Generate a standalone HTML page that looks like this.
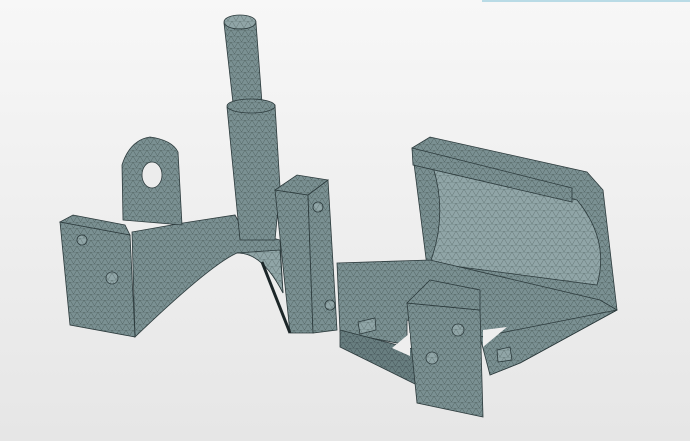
<!DOCTYPE html>
<html><head><meta charset="utf-8"><style>
html,body{margin:0;padding:0;}
body{width:690px;height:441px;overflow:hidden;background:linear-gradient(#f7f7f7,#e6e6e6);position:relative;}
.bar{position:absolute;left:482px;top:0;width:208px;height:2px;background:#b9dbe6;}
</style></head><body>
<div class="bar"></div>
<svg width="690" height="441" style="position:absolute;left:0;top:0">
<defs>
<pattern id="m" width="7" height="6" patternUnits="userSpaceOnUse">
<rect width="7" height="6" fill="#7a9092"/>
<path d="M0 0L7 0M0 0L3.5 6L7 0" stroke="#33423f" stroke-width="0.5" fill="none" opacity="0.6"/>
</pattern>
<pattern id="l" width="8" height="7" patternUnits="userSpaceOnUse">
<rect width="8" height="7" fill="#90a5a7"/>
<path d="M0 0L8 0M0 0L4 7L8 0" stroke="#33423f" stroke-width="0.5" fill="none" opacity="0.5"/>
</pattern>
<pattern id="d" width="7" height="6" patternUnits="userSpaceOnUse">
<rect width="7" height="6" fill="#687e80"/>
<path d="M0 0L7 0M0 0L3.5 6L7 0" stroke="#2a3638" stroke-width="0.5" fill="none" opacity="0.6"/>
</pattern>
</defs>
<g stroke="#2c3a3c" stroke-width="0.8">
<polygon points="412,148 430,137 587,172 603,190 617,310 520,363 430,290" fill="url(#m)"/>
<path d="M433,167 Q448,215 430,263 L597,285 Q610,240 577,200 Z" fill="url(#l)"/>
<polygon points="412,148 572,188 572,202 413,165" fill="url(#m)"/>
<polygon points="337,263 430,260 600,300 617,310 520,363 490,375 483,340 407,320 407,345 340,332" fill="url(#m)"/>
<polygon points="480,337 617,310 520,363 490,375" fill="url(#m)"/>
<polygon points="340,330 417,350 417,385 340,347" fill="url(#d)"/>
<path d="M132,232 L183,223 L235,215 L243,230 L280,240 L283,293 Q262,252 237,253 Q210,265 135,337 Z" fill="url(#m)"/>
<path d="M237,253 Q262,252 283,293 L280,250 Z" fill="url(#l)"/>
<path d="M123,220 L122,165 Q130,140 150,137 Q172,140 178,152 L182,225 Z" fill="url(#m)"/>
<ellipse cx="152" cy="175" rx="10" ry="13" fill="#ececec"/>
<polygon points="60,222 130,235 135,337 70,325" fill="url(#m)"/>
<polygon points="60,222 73,215 125,225 130,235" fill="url(#m)"/>
<circle cx="82" cy="240" r="5" fill="url(#l)"/><circle cx="112" cy="278" r="6" fill="url(#l)"/>
<polygon points="224,23 256,23 262,103 233,103" fill="url(#m)"/>
<ellipse cx="240" cy="22" rx="16" ry="7" fill="url(#l)"/>
<polygon points="227,107 275,105 280,187 275,240 240,240" fill="url(#m)"/>
<ellipse cx="251" cy="106" rx="24" ry="7" fill="url(#m)"/>
<polygon points="275,190 308,195 313,333 290,333" fill="url(#m)"/>
<polygon points="308,195 328,180 337,330 313,333" fill="url(#m)"/>
<polygon points="275,190 297,175 328,180 308,195" fill="url(#m)"/>
<path d="M262,262 L290,333" stroke="#1c2628" stroke-width="3"/>
<circle cx="318" cy="207" r="5" fill="url(#l)"/><circle cx="330" cy="305" r="5" fill="url(#l)"/>
<polygon points="407,303 480,310 483,417 417,403" fill="url(#m)"/>
<polygon points="430,280 480,290 480,310 407,303" fill="url(#m)"/>
<circle cx="458" cy="330" r="6" fill="url(#l)"/><circle cx="432" cy="358" r="6" fill="url(#l)"/>
<polygon points="358,322 375,318 376,330 360,334" fill="url(#l)"/>
<polygon points="497,350 510,347 512,360 498,362" fill="url(#l)"/>
</g>
<polygon points="392,348 410,333 410,356" fill="#eeeeee"/>
<polygon points="483,330 507,327 483,347" fill="#eeeeee"/>
</svg>
</body></html>
